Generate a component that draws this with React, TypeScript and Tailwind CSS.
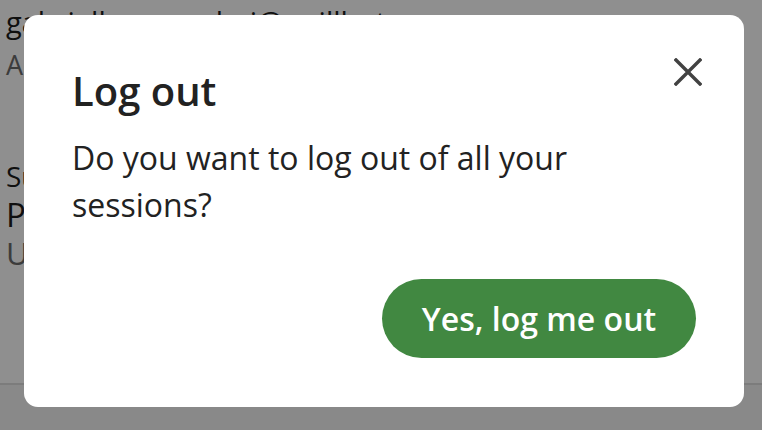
import React from "react";

export default function App() {
  return (
    <div
      className="relative w-[762px] h-[430px] overflow-hidden bg-white flex flex-col"
      style={{ fontFamily: '"Open Sans", "Noto Sans", sans-serif' }}
    >
      {/* page behind the dialog */}
      <div className="flex flex-col pl-[6px] pt-[5px]">
        <div className="text-[29px] leading-[34px] text-[#1c1c1c] whitespace-nowrap">
          gabrielle.moreshai@quillbot.com
        </div>
        <div className="mt-[10px] text-[27px] leading-[32px] text-[#6b6b6b] whitespace-nowrap">
          Account email
        </div>
        <div className="mt-[79px] text-[28px] leading-[32px] text-[#1c1c1c] whitespace-nowrap">
          Subscription
        </div>
        <div className="mt-[3px] text-[33px] leading-[40px] text-[#1c1c1c] whitespace-nowrap">
          Premium
        </div>
        <div className="text-[31px] leading-[36px] text-[#6b6b6b] whitespace-nowrap">
          Upgrade your plan
        </div>
      </div>
      <div className="mt-auto h-[47px] border-t-2 border-[#dedede] bg-[#f5f5f5]" />

      {/* overlay */}
      <div className="absolute inset-0 bg-[rgba(0,0,0,0.44)]" />

      {/* dialog */}
      <div className="absolute left-[24px] top-[15px] w-[720px] h-[392px] rounded-[14px] bg-white flex flex-col px-[48px] pt-[52px] pb-[49px]">
        <button
          type="button"
          aria-label="Close"
          className="absolute top-[43px] right-[42px] w-[28px] h-[28px] flex items-center justify-center"
        >
          <svg width="28" height="28" viewBox="0 0 28 28" fill="none">
            <path
              d="M2 2 L26 26 M26 2 L2 26"
              stroke="#424242"
              strokeWidth="3.4"
              strokeLinecap="square"
            />
          </svg>
        </button>
        <h2 className="text-[40px] leading-[48px] font-semibold text-[#222222]">
          Log out
        </h2>
        <p className="mt-[19px] max-w-[580px] text-[32px] leading-[47px] text-[#222222]">
          Do you want to log out of all your sessions?
        </p>
        <div className="mt-auto flex justify-end">
          <button
            type="button"
            className="w-[314px] h-[79px] rounded-full bg-[#418841] text-white text-[32px] font-semibold"
          >
            Yes, log me out
          </button>
        </div>
      </div>
    </div>
  );
}
